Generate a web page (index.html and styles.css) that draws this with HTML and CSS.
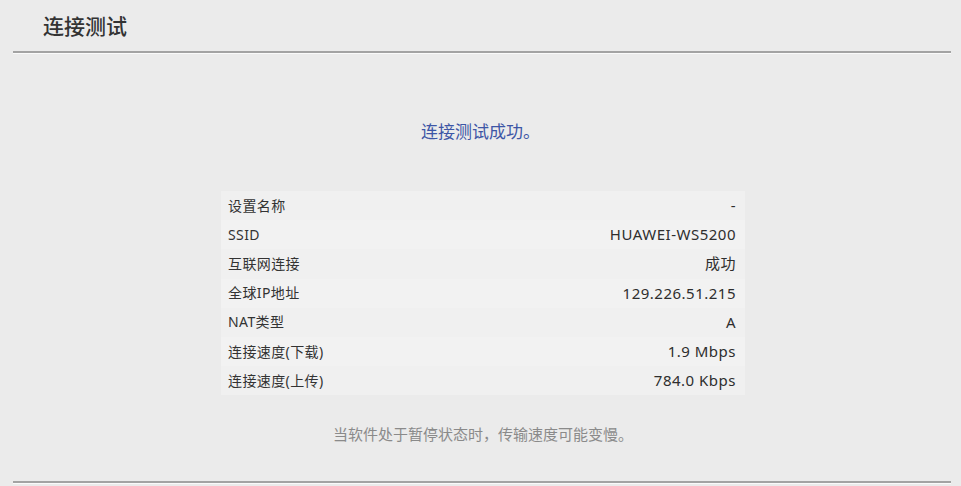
FILE: index.html
```html
<!DOCTYPE html>
<html lang="zh">
<head>
<meta charset="utf-8">
<link rel="stylesheet" href="styles.css">
</head>
<body>
<div class="page">
  <header class="head">
    <h1 class="title">连接测试</h1>
  </header>
  <div class="rule"></div>
  <main class="content">
    <p class="status">连接测试成功。</p>
    <div class="table">
      <div class="row"><span class="k">设置名称</span><span class="v">-</span></div>
      <div class="row"><span class="k">SSID</span><span class="v">HUAWEI-WS5200</span></div>
      <div class="row"><span class="k">互联网连接</span><span class="v">成功</span></div>
      <div class="row"><span class="k">全球IP地址</span><span class="v">129.226.51.215</span></div>
      <div class="row"><span class="k">NAT类型</span><span class="v">A</span></div>
      <div class="row"><span class="k">连接速度(下载)</span><span class="v">1.9 Mbps</span></div>
      <div class="row"><span class="k">连接速度(上传)</span><span class="v">784.0 Kbps</span></div>
    </div>
    <p class="note">当软件处于暂停状态时，传输速度可能变慢。</p>
  </main>
  <div class="rule bottom"></div>
</div>
</body>
</html>
```

FILE: styles.css
```css
html, body {
  margin: 0;
  padding: 0;
  background: #ebebeb;
}
body {
  width: 961px;
  height: 486px;
  overflow: hidden;
  font-family: "Noto Sans", "Noto Sans CJK SC", sans-serif;
}
.page {
  display: flex;
  flex-direction: column;
  height: 486px;
}
.head {
  height: 51px;
  display: flex;
  align-items: center;
  padding-left: 43px;
}
.title {
  margin: 0;
  font-size: 21px;
  font-weight: 500;
  color: #333;
  font-family: "Noto Sans CJK SC", sans-serif;
  line-height: 1;
}
.rule {
  margin: 0 10px 0 13px;
  height: 2px;
  background: #a3a3a3;
  border-bottom: 1px solid #fafafa;
}
.content {
  flex: 1;
  display: flex;
  flex-direction: column;
  align-items: center;
}
.status {
  margin: 67px 0 0 0;
  font-family: "Noto Sans CJK SC", sans-serif;
  font-size: 17px;
  line-height: 20px;
  color: #3d56a6;
}
.table {
  margin-top: 50px;
  width: 524px;
  margin-left: 5px;
  background: #f0f0f0;
  display: flex;
  flex-direction: column;
}
.row {
  height: 29.2px;
  display: flex;
  align-items: center;
  justify-content: space-between;
  padding: 0 9px 0 7px;
  font-size: 14px;
  color: #333;
  font-family: "Noto Sans", "Noto Sans CJK SC", sans-serif;
}
.row:nth-child(even) {
  background: #f2f2f2;
}
.k, .v {
  line-height: 1;
  letter-spacing: 0.4px;
}
.v {
  font-size: 15px;
  letter-spacing: 0.5px;
  color: #2e2e2e;
}
.note {
  margin: 28px 0 0 0;
  font-family: "Noto Sans CJK SC", sans-serif;
  font-size: 15px;
  line-height: 22px;
  color: #8a8a8a;
  margin-left: 5px;
}
.bottom {
  margin-bottom: 2px;
}
```
